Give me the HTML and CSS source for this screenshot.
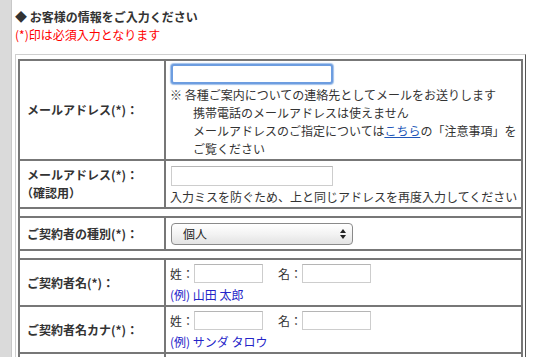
FILE: index.html
```html
<!DOCTYPE html>
<html lang="ja">
<head>
<meta charset="utf-8">
<title>お客様の情報</title>
<link rel="stylesheet" href="styles.css">
</head>
<body>
<div class="page">
  <div class="side"></div>
  <div class="main">
    <h2 class="title">◆ お客様の情報をご入力ください</h2>
    <p class="req">(*)印は必須入力となります</p>
    <div class="frame">
      <table class="form">
        <tr class="r1">
          <th>メールアドレス(*)：</th>
          <td>
            <input class="mail focus" type="text">
            <div class="note">※ 各種ご案内についての連絡先としてメールをお送りします</div>
            <div class="note ind">携帯電話のメールアドレスは使えません</div>
            <div class="note ind">メールアドレスのご指定については<a href="#">こちら</a>の「注意事項」を</div>
            <div class="note ind">ご覧ください</div>
          </td>
        </tr>
        <tr class="r2">
          <th>メールアドレス(*)：<br><span class="confirm">（確認用）</span></th>
          <td>
            <input class="mail" type="text">
            <div class="note">入力ミスを防ぐため、上と同じアドレスを再度入力してください</div>
          </td>
        </tr>
        <tr class="spacer"><td colspan="2"></td></tr>
        <tr class="r3">
          <th>ご契約者の種別(*)：</th>
          <td>
            <div class="select">
              <span class="sel-text">個人</span>
              <svg class="sel-arrow" width="6" height="10" viewBox="0 0 6 10"><path d="M3 0 L6 4 L0 4 Z M0 6 L6 6 L3 10 Z" fill="#222"/></svg>
            </div>
          </td>
        </tr>
        <tr class="spacer"><td colspan="2"></td></tr>
        <tr class="r4">
          <th>ご契約者名(*)：</th>
          <td>
            <div class="name-row">
              <span>姓：</span><input class="name" type="text">
              <span class="mei">名：</span><input class="name" type="text">
            </div>
            <div class="example">(例) 山田 太郎</div>
          </td>
        </tr>
        <tr class="r4">
          <th>ご契約者名カナ(*)：</th>
          <td>
            <div class="name-row">
              <span>姓：</span><input class="name" type="text">
              <span class="mei">名：</span><input class="name" type="text">
            </div>
            <div class="example">(例) サンダ タロウ</div>
          </td>
        </tr>
        <tr class="r4">
          <th>&nbsp;</th>
          <td>&nbsp;</td>
        </tr>
      </table>
    </div>
  </div>
</div>
</body>
</html>
```
FILE: styles.css
```css
html, body {
  margin: 0;
  padding: 0;
  background: #fff;
}
body {
  font-family: "Noto Sans CJK JP", "Noto Sans", sans-serif;
  color: #333;
  overflow: hidden;
}
.page {
  display: flex;
  min-height: 357px;
}
.side {
  flex: none;
  width: 11px;
  background: #dadada;
  border-right: 1px solid #c8c8c8;
}
.main {
  flex: none;
  width: 511px;
  padding: 8px 0 0 3px;
}
.title {
  margin: 0;
  font-size: 12px;
  line-height: 18px;
  font-weight: bold;
  color: #333;
}
.req {
  margin: 0;
  font-size: 12px;
  line-height: 18px;
  color: #f00;
}
.frame {
  margin-top: 10px;
  border: 1px solid;
  border-color: #cfcfcf #555 #555 #cfcfcf;
  padding: 4px 2px 2px 2px;
}
.form {
  width: 100%;
  table-layout: fixed;
  border-collapse: separate;
  border-spacing: 0;
  border-top: 2px solid #777;
  border-left: 2px solid #777;
}
.form th,
.form td {
  border-right: 2px solid #777;
  border-bottom: 2px solid #777;
  font-size: 12px;
  line-height: 18px;
}
.form th {
  width: 146px;
  box-sizing: border-box;
  text-align: left;
  font-weight: bold;
  color: #333;
  padding: 0 0 0 7px;
  vertical-align: middle;
}
.confirm {
  margin-left: -6px;
}
.form td {
  padding: 3px 2px 1px 4px;
  vertical-align: top;
  color: #333;
}
.r2 td { padding-top: 5px; }
.r3 td { padding: 5px 2px 4px 4px; }
.r4 td { padding-top: 4px; }
.spacer td {
  height: 7px;
  padding: 0;
}
.note {
  white-space: nowrap;
}
.ind {
  padding-left: 23px;
}
.note a {
  color: #2256b8;
  text-decoration: underline;
}
.mail {
  display: block;
  box-sizing: border-box;
  width: 162px;
  height: 20px;
  margin: 0 0 2px 1px;
  padding: 0;
  border: 1px solid #cdcdcd;
  border-top-color: #b5b5b5;
  background: #fff;
}
.mail.focus {
  border: 2px solid #6d9de0;
  border-radius: 3px;
  box-shadow: 0 0 1px 1px rgba(120, 165, 225, 0.7);
}
.select {
  position: relative;
  box-sizing: border-box;
  width: 182px;
  height: 22px;
  margin-left: 1px;
  border: 1px solid #8a8a8a;
  border-radius: 4px;
  background: linear-gradient(#ffffff, #f3f3f3 50%, #e3e3e3);
  display: flex;
  align-items: center;
  padding-left: 11px;
  font-size: 12px;
  color: #222;
}
.sel-arrow {
  position: absolute;
  right: 6px;
  top: 5px;
}
.name-row {
  display: flex;
  align-items: center;
}
.name {
  box-sizing: border-box;
  width: 69px;
  height: 19px;
  margin: 0;
  padding: 0;
  border: 1px solid #cdcdcd;
  border-top-color: #b5b5b5;
  background: #fff;
}
.mei {
  margin-left: 15px;
}
.example {
  margin-top: 3px;
  color: #2424c8;
}
```
